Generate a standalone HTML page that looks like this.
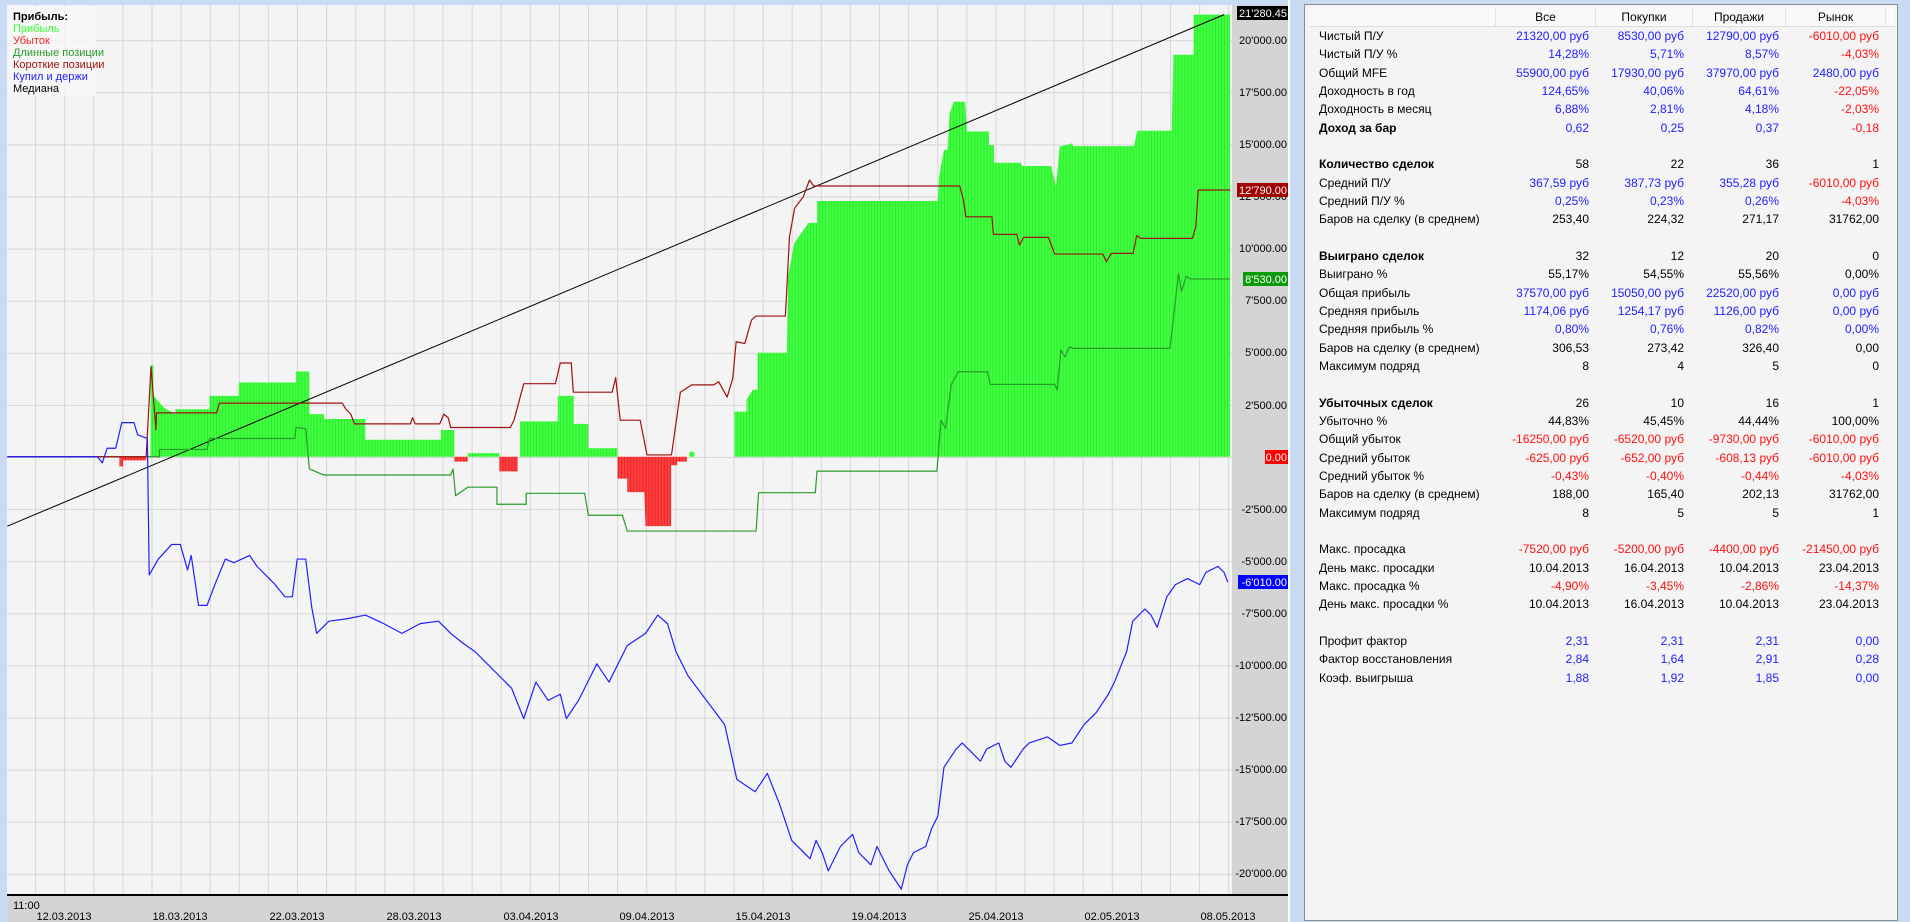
<!DOCTYPE html>
<html><head><meta charset="utf-8">
<style>
*{margin:0;padding:0;box-sizing:border-box}
body{width:1910px;height:922px;overflow:hidden;background:#c9dbf2;position:relative;font-family:"Liberation Sans","DejaVu Sans",sans-serif}
.ax{position:absolute;right:623px;font-size:11px;color:#000;white-space:nowrap;line-height:13px}
.tag{position:absolute;right:623px;font-size:11.5px;color:#fff;padding:0 1px;line-height:13px}
#panel{position:absolute;left:1304px;top:4px;width:594px;height:917px;background:#f4f4f4;border:1px solid #8c8c8c}
#hdr{position:absolute;left:4px;top:3px;width:586px;height:19px;background:#f9f9f9;border-bottom:1px solid #dcdcdc}
#hdr div{position:absolute;top:0;height:19px;border-left:1px solid #e2e2e2;text-align:center;font-size:12px;line-height:19px}
.r{position:absolute;left:0;width:594px;height:16px;font-size:12px;line-height:16px}
.r span{position:absolute;white-space:nowrap}
.r .l{left:14px}
.r .a{right:310px}.r .b{right:215px}.r .c{right:120px}.r .d{right:20px}
.B{color:#2020ff}.R{color:#ff1010}.K{color:#000}
.bold{font-weight:bold}
</style></head><body>
<svg width="1910" height="922" style="position:absolute;left:0;top:0">
<defs>
<pattern id="grid" patternUnits="userSpaceOnUse" x="6" y="40.2" width="29.1" height="52.1">
<rect x="0" y="0" width="1" height="52.1" fill="#d6d6d6"/>
<rect x="0" y="0" width="29.1" height="1" fill="#d6d6d6"/>
</pattern>
<pattern id="gs" patternUnits="userSpaceOnUse" width="2.5" height="10">
<rect width="2.5" height="10" fill="#40ff40"/><rect width="0.7" height="10" fill="#2ee62e"/>
</pattern>
<pattern id="rs" patternUnits="userSpaceOnUse" width="2.5" height="10">
<rect width="2.5" height="10" fill="#ff4040"/><rect width="0.7" height="10" fill="#e62020"/>
</pattern>
</defs>
<rect x="7" y="5" width="1226" height="890" fill="#f4f4f4"/>
<rect x="7" y="5" width="1226" height="890" fill="url(#grid)"/>
<rect x="1232" y="5" width="56" height="890" fill="#d4d4d4"/>
<rect x="1288" y="0" width="2" height="922" fill="#fff"/>
<rect x="7" y="895" width="1281" height="27" fill="#d4d4d4"/>
<rect x="7" y="894" width="1281" height="2" fill="#000"/>
<rect x="8" y="6" width="88" height="90" fill="#f8f8f8" opacity="0.8"/>
<g transform="scale(1.218)">
<polygon fill="url(#gs)" points="122,375 123.6,375 123.6,300 126,300 126,325 135,335 144,340 144,336 172,336 172,325 196,325 196,314 243,314 243,305 254,305 254,340 266,340 266,344 300,344 300,361 362,361 362,353 373,353 373,375"/>
<polygon fill="url(#gs)" points="384,375 384,372 410,372 410,375"/>
<polygon fill="url(#gs)" points="427,375 427,346 458,346 458,325 471,325 471,348 483,348 483,368 507,368 507,375"/>
<polygon fill="url(#gs)" points="566,375 566,371 570,371 570,375"/>
<polygon fill="url(#gs)" points="601.6,375 603,375 603,338 613,338 613,328 618,320 622,320 622,289.6 646,289.6 647,227 652,200 658,191 664,183 670.8,183 670.8,165 770,165 771,145 775,123 778,123 779.7,93 783,83.5 792.4,83.5 793.8,108 812,108 812,119 816,119 816,133.6 838,133.6 839,136.3 863,136.3 867,153 870,120.4 880,117.7 881,120 931,120 933.7,107.3 962,107.3 963.4,45 980,45 980,12 1010,12 1010,375"/>
<polygon fill="url(#rs)" points="373,375 373,379 384,379 384,375"/>
<polygon fill="url(#rs)" points="410,375 410,387 425,387 425,375"/>
<polygon fill="url(#rs)" points="507,375 507,393 515,393 515,404 529,404 530,432 551,432 551,382 556,382 556,379 564,379 564,375"/>
<polygon fill="url(#rs)" points="98,375 98,383 101,383 101,378 120,378 120,375"/>
<g fill="none" vector-effect="non-scaling-stroke" stroke-linejoin="round">
<polyline stroke="#000" stroke-width="1" vector-effect="non-scaling-stroke" points="6,432 1005,12"/>
<polyline stroke="#2a9a2a" stroke-width="1.2" vector-effect="non-scaling-stroke" points="6,375 131,375 131,369 148,369 170,369 172,360 242,360 243,351 251,352 254,385 266,390 370,390 372,385 374,407 384,400 408,400 408,414 432,414 432,405 480,405 483,423 511,423 515,436 620.8,436 622.8,404.5 669.4,404.5 670.8,386.8 769.2,386.8 772.6,344.9 776.3,351.7 781,316 786.7,305.2 810.8,305.2 813,315.6 866,315.6 868,320.2 871,287.4 874.4,293 877.8,285 881.4,286 960.6,286 967.6,224.4 970,239.5 973.9,227 977.5,229 1010,229"/>
<polyline stroke="#a01010" stroke-width="1.2" vector-effect="non-scaling-stroke" points="6,375 120,375 124,301 128,353 128.5,339 178,339 180,331 281,331 284,336 288,340 291,348 337,348 338.7,343 341,348 361,348 364.4,340 368,343 370,351 419,351 422,345 430,315 456,315 460,298 469,298 470.7,322 502.6,322 505.5,310 509.2,345 525.6,345 531.2,373.5 551.3,373.5 558.6,322 567.8,316 586,316 590,313.4 597,326 601.6,310.7 604.4,280.6 611.5,282 617,262.8 620.5,259.5 644.8,259.5 648.2,194.3 652.4,171 659.5,161.5 664.6,147.8 668,152.7 788,152.7 791,164.2 793,178 814.4,178 815.6,192.4 834.8,192.4 837,201.2 840.4,194.9 860.8,194.9 865.9,208.6 905.5,208.6 908.3,214.9 912.5,208 930.3,208 933.2,193.5 936.6,195.7 979,195.7 981.8,186 983.8,156 1010,156"/>
<polyline stroke="#2020ff" stroke-width="1.2" vector-effect="non-scaling-stroke" points="6,375 80,375 84,380 88,368 95,368 100,347 110,347 113,357 121,360 122.5,472 130,459 141,447 148,447 154,468 157,456 163,497 170,497 176,481 185,459 192,462 205,456 211,465 216,470 225,479 234,490 240,490 244,459 251,459 256,499 260,520 270,510 285,508 300,505 315,512 330,520 345,512 360,510 370,520 380,528 390,535 400,545 410,555 420,565 430,590 440,560 450,575 460,570 465,590 475,575 490,545 500,560 515,530 530,520 540,505 548,512 555,535 565,555 580,575 595,595 605,640 620,650 630,635 640,660 650,690 660,700 665,705 670,690 675,700 680,715 690,695 700,685 705,700 715,710 720,695 730,715 740,730 745,710 750,700 760,695 765,680 770,670 775,630 785,615 790,610 800,620 805,625 810,615 820,610 825,625 830,630 840,615 845,610 860,605 870,612 880,610 890,595 900,585 910,570 915,560 925,535 930,510 940,500 945,505 950,515 958,490 965,480 975,475 985,480 990,470 1000,465 1005,470 1008,478"/>
</g>
</g>
<g font-family="Liberation Sans, sans-serif" font-size="11">
<text x="13" y="20" font-weight="bold" fill="#000">Прибыль:</text>
<text x="13" y="32" fill="#33ff33">Прибыль</text>
<text x="13" y="44" fill="#ff2020">Убыток</text>
<text x="13" y="56" fill="#2a9a2a">Длинные позиции</text>
<text x="13" y="68" fill="#a01010">Короткие позиции</text>
<text x="13" y="80" fill="#2020ff">Купил и держи</text>
<text x="13" y="92" fill="#000">Медиана</text>
<text x="13" y="909" fill="#000">11:00</text>
<g text-anchor="middle" fill="#000">
<text x="64" y="920">12.03.2013</text><text x="180" y="920">18.03.2013</text><text x="297" y="920">22.03.2013</text><text x="414" y="920">28.03.2013</text><text x="531" y="920">03.04.2013</text><text x="647" y="920">09.04.2013</text><text x="763" y="920">15.04.2013</text><text x="879" y="920">19.04.2013</text><text x="996" y="920">25.04.2013</text><text x="1112" y="920">02.05.2013</text><text x="1228" y="920">08.05.2013</text>
</g>
<g text-anchor="end" fill="#000">
<text x="1287" y="44">20'000.00</text><text x="1287" y="96">17'500.00</text><text x="1287" y="148">15'000.00</text><text x="1287" y="200">12'500.00</text><text x="1287" y="252">10'000.00</text><text x="1287" y="304">7'500.00</text><text x="1287" y="356">5'000.00</text><text x="1287" y="409">2'500.00</text><text x="1287" y="513">-2'500.00</text><text x="1287" y="565">-5'000.00</text><text x="1287" y="617">-7'500.00</text><text x="1287" y="669">-10'000.00</text><text x="1287" y="721">-12'500.00</text><text x="1287" y="773">-15'000.00</text><text x="1287" y="825">-17'500.00</text><text x="1287" y="877">-20'000.00</text>
</g>
<rect x="1237" y="6" width="51" height="14" fill="#000"/><text x="1287" y="17" text-anchor="end" fill="#fff">21'280.45</text>
<rect x="1237" y="183" width="51" height="14" fill="#a00000"/><text x="1287" y="194" text-anchor="end" fill="#fff">12'790.00</text>
<rect x="1243" y="272" width="45" height="14" fill="#0a9a0a"/><text x="1287" y="283" text-anchor="end" fill="#fff">8'530.00</text>
<rect x="1265" y="450" width="23" height="14" fill="#ff0000"/><text x="1287" y="461" text-anchor="end" fill="#fff">0.00</text>
<rect x="1238" y="575" width="50" height="14" fill="#0000ff"/><text x="1287" y="586" text-anchor="end" fill="#fff">-6'010.00</text>
</g>
</svg>
<div id="panel">
<div id="hdr">
<div style="left:186px;width:100px">Все</div>
<div style="left:286px;width:97px">Покупки</div>
<div style="left:383px;width:93px">Продажи</div>
<div style="left:476px;width:100px">Рынок</div>
<div style="left:576px;width:10px"></div>
</div>
<div class="r" style="top:23px"><span class="l">Чистый П/У</span><span class="a B">21320,00 руб</span><span class="b B">8530,00 руб</span><span class="c B">12790,00 руб</span><span class="d R">-6010,00 руб</span></div>
<div class="r" style="top:41px"><span class="l">Чистый П/У %</span><span class="a B">14,28%</span><span class="b B">5,71%</span><span class="c B">8,57%</span><span class="d R">-4,03%</span></div>
<div class="r" style="top:60px"><span class="l">Общий MFE</span><span class="a B">55900,00 руб</span><span class="b B">17930,00 руб</span><span class="c B">37970,00 руб</span><span class="d B">2480,00 руб</span></div>
<div class="r" style="top:78px"><span class="l">Доходность в год</span><span class="a B">124,65%</span><span class="b B">40,06%</span><span class="c B">64,61%</span><span class="d R">-22,05%</span></div>
<div class="r" style="top:96px"><span class="l">Доходность в месяц</span><span class="a B">6,88%</span><span class="b B">2,81%</span><span class="c B">4,18%</span><span class="d R">-2,03%</span></div>
<div class="r" style="top:115px"><span class="l bold">Доход за бар</span><span class="a B">0,62</span><span class="b B">0,25</span><span class="c B">0,37</span><span class="d R">-0,18</span></div>
<div class="r" style="top:151px"><span class="l bold">Количество сделок</span><span class="a">58</span><span class="b">22</span><span class="c">36</span><span class="d">1</span></div>
<div class="r" style="top:170px"><span class="l">Средний П/У</span><span class="a B">367,59 руб</span><span class="b B">387,73 руб</span><span class="c B">355,28 руб</span><span class="d R">-6010,00 руб</span></div>
<div class="r" style="top:188px"><span class="l">Средний П/У %</span><span class="a B">0,25%</span><span class="b B">0,23%</span><span class="c B">0,26%</span><span class="d R">-4,03%</span></div>
<div class="r" style="top:206px"><span class="l">Баров на сделку (в среднем)</span><span class="a">253,40</span><span class="b">224,32</span><span class="c">271,17</span><span class="d">31762,00</span></div>
<div class="r" style="top:243px"><span class="l bold">Выиграно сделок</span><span class="a">32</span><span class="b">12</span><span class="c">20</span><span class="d">0</span></div>
<div class="r" style="top:261px"><span class="l">Выиграно %</span><span class="a">55,17%</span><span class="b">54,55%</span><span class="c">55,56%</span><span class="d">0,00%</span></div>
<div class="r" style="top:280px"><span class="l">Общая прибыль</span><span class="a B">37570,00 руб</span><span class="b B">15050,00 руб</span><span class="c B">22520,00 руб</span><span class="d B">0,00 руб</span></div>
<div class="r" style="top:298px"><span class="l">Средняя прибыль</span><span class="a B">1174,06 руб</span><span class="b B">1254,17 руб</span><span class="c B">1126,00 руб</span><span class="d B">0,00 руб</span></div>
<div class="r" style="top:316px"><span class="l">Средняя прибыль %</span><span class="a B">0,80%</span><span class="b B">0,76%</span><span class="c B">0,82%</span><span class="d B">0,00%</span></div>
<div class="r" style="top:335px"><span class="l">Баров на сделку (в среднем)</span><span class="a">306,53</span><span class="b">273,42</span><span class="c">326,40</span><span class="d">0,00</span></div>
<div class="r" style="top:353px"><span class="l">Максимум подряд</span><span class="a">8</span><span class="b">4</span><span class="c">5</span><span class="d">0</span></div>
<div class="r" style="top:390px"><span class="l bold">Убыточных сделок</span><span class="a">26</span><span class="b">10</span><span class="c">16</span><span class="d">1</span></div>
<div class="r" style="top:408px"><span class="l">Убыточно %</span><span class="a">44,83%</span><span class="b">45,45%</span><span class="c">44,44%</span><span class="d">100,00%</span></div>
<div class="r" style="top:426px"><span class="l">Общий убыток</span><span class="a R">-16250,00 руб</span><span class="b R">-6520,00 руб</span><span class="c R">-9730,00 руб</span><span class="d R">-6010,00 руб</span></div>
<div class="r" style="top:445px"><span class="l">Средний убыток</span><span class="a R">-625,00 руб</span><span class="b R">-652,00 руб</span><span class="c R">-608,13 руб</span><span class="d R">-6010,00 руб</span></div>
<div class="r" style="top:463px"><span class="l">Средний убыток %</span><span class="a R">-0,43%</span><span class="b R">-0,40%</span><span class="c R">-0,44%</span><span class="d R">-4,03%</span></div>
<div class="r" style="top:481px"><span class="l">Баров на сделку (в среднем)</span><span class="a">188,00</span><span class="b">165,40</span><span class="c">202,13</span><span class="d">31762,00</span></div>
<div class="r" style="top:500px"><span class="l">Максимум подряд</span><span class="a">8</span><span class="b">5</span><span class="c">5</span><span class="d">1</span></div>
<div class="r" style="top:536px"><span class="l">Макс. просадка</span><span class="a R">-7520,00 руб</span><span class="b R">-5200,00 руб</span><span class="c R">-4400,00 руб</span><span class="d R">-21450,00 руб</span></div>
<div class="r" style="top:555px"><span class="l">День макс. просадки</span><span class="a">10.04.2013</span><span class="b">16.04.2013</span><span class="c">10.04.2013</span><span class="d">23.04.2013</span></div>
<div class="r" style="top:573px"><span class="l">Макс. просадка %</span><span class="a R">-4,90%</span><span class="b R">-3,45%</span><span class="c R">-2,86%</span><span class="d R">-14,37%</span></div>
<div class="r" style="top:591px"><span class="l">День макс. просадки %</span><span class="a">10.04.2013</span><span class="b">16.04.2013</span><span class="c">10.04.2013</span><span class="d">23.04.2013</span></div>
<div class="r" style="top:628px"><span class="l">Профит фактор</span><span class="a B">2,31</span><span class="b B">2,31</span><span class="c B">2,31</span><span class="d B">0,00</span></div>
<div class="r" style="top:646px"><span class="l">Фактор восстановления</span><span class="a B">2,84</span><span class="b B">1,64</span><span class="c B">2,91</span><span class="d B">0,28</span></div>
<div class="r" style="top:665px"><span class="l">Коэф. выигрыша</span><span class="a B">1,88</span><span class="b B">1,92</span><span class="c B">1,85</span><span class="d B">0,00</span></div>
</div>
</body></html>
